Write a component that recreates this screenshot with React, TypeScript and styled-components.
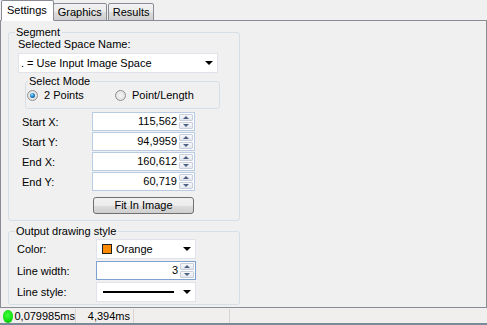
import React from 'react';
import styled, { createGlobalStyle } from 'styled-components';

const GlobalStyle = createGlobalStyle`
  html, body {
    margin: 0;
    padding: 0;
    background: #f0f0f0;
  }
  body {
    font-family: 'Liberation Sans', Arial, sans-serif;
    font-size: 11px;
    color: #000;
  }
`;

const Window = styled.div`
  width: 487px;
  height: 325px;
  display: flex;
  flex-direction: column;
  background: #f0f0f0;
  overflow: hidden;
`;

const TabStrip = styled.div`
  height: 21px;
  display: flex;
  align-items: flex-end;
  padding-left: 2px;
  margin-bottom: -1px;
  position: relative;
  z-index: 1;
`;

const Tab = styled.div<{ $active?: boolean }>`
  height: ${(p) => (p.$active ? '21px' : '18px')};
  box-sizing: border-box;
  padding: ${(p) => (p.$active ? '3px 6px 0 5px' : '2px 4px 0 4px')};
  margin-right: ${(p) => (p.$active ? '-1px' : '1px')};
  border: 1px solid #898c95;
  border-bottom: ${(p) => (p.$active ? '1px solid #fff' : '1px solid #898c95')};
  border-radius: 2px 2px 0 0;
  background: ${(p) =>
    p.$active ? '#ffffff' : 'linear-gradient(#f2f2f2, #ebebeb 50%, #dddddd 51%, #cfcfcf)'};
  line-height: 13px;
  ${(p) => (p.$active ? 'margin-left: -1px; z-index: 2;' : '')}
`;

const Panel = styled.div`
  height: 288px;
  box-sizing: border-box;
  border: 1px solid #898c95;
  background: #f0f0f0;
  padding: 11px 0 0 7px;
  display: flex;
  flex-direction: column;
`;

const Group = styled.div<{ $h: number; $w: number }>`
  width: ${(p) => p.$w}px;
  height: ${(p) => p.$h}px;
  box-sizing: border-box;
  border: 1px solid #d5dfe5;
  border-radius: 3px;
  display: flex;
  flex-direction: column;
`;

const Legend = styled.div`
  margin: -7px 0 0 6px;
  padding: 0 2px 0 1px;
  background: #f0f0f0;
  line-height: 13px;
  width: fit-content;
`;

const Label = styled.div`
  line-height: 13px;
  margin: -1px 0 0 9px;
`;

const ComboBox = styled.div<{ $w: number }>`
  width: ${(p) => p.$w}px;
  height: 20px;
  box-sizing: border-box;
  border: 1px solid #e2e3ea;
  background: #fff;
  display: flex;
  align-items: center;
  padding: 0 0 0 2px;
`;

const ComboText = styled.span`
  flex: 1;
  display: flex;
  align-items: center;
  gap: 4px;
  line-height: 13px;
`;

const Arrow = styled.span`
  width: 0;
  height: 0;
  border-left: 4px solid transparent;
  border-right: 4px solid transparent;
  border-top: 4px solid #000;
  margin-right: 4px;
`;

const SpaceCombo = styled(ComboBox)`
  margin: 2px 0 0 9px;
`;

const ModeBox = styled.div`
  width: 195px;
  height: 28px;
  box-sizing: border-box;
  margin: 8px 0 0 16px;
  border: 1px solid #d5dfe5;
  border-radius: 3px;
  display: flex;
  flex-direction: column;
`;

const ModeLegend = styled(Legend)`
  margin: -7px 0 0 2px;
`;

const RadioRow = styled.div`
  display: flex;
  align-items: center;
  margin: 1px 0 0 1px;
  height: 13px;
`;

const RadioItem = styled.label<{ $w: number }>`
  display: flex;
  align-items: center;
  gap: 6px;
  width: ${(p) => p.$w}px;
  line-height: 13px;
`;

const RadioDot = styled.span<{ $on?: boolean }>`
  width: 11px;
  height: 11px;
  box-sizing: border-box;
  border-radius: 50%;
  border: 1px solid #8e8f8f;
  background: radial-gradient(circle, #f4f4f4 0%, #dcdcdc 100%);
  display: flex;
  align-items: center;
  justify-content: center;
  &::after {
    content: '';
    display: ${(p) => (p.$on ? 'block' : 'none')};
    width: 5px;
    height: 5px;
    border-radius: 50%;
    background: radial-gradient(circle at 40% 35%, #8ee0ff 0%, #1b7ec2 50%, #0c3f73 100%);
  }
`;

const Fields = styled.div`
  display: flex;
  flex-direction: column;
  gap: 1px;
  margin-top: 3px;
`;

const FieldRow = styled.div<{ $labelW: number; $pad: number }>`
  display: grid;
  grid-template-columns: ${(p) => p.$labelW}px auto;
  align-items: center;
  padding-left: ${(p) => p.$pad}px;
  height: 19px;
`;

const SpinBox = styled.div<{ $w: number; $focus?: boolean }>`
  width: ${(p) => p.$w}px;
  height: 19px;
  box-sizing: border-box;
  border: 1px solid ${(p) => (p.$focus ? '#7da2ce' : '#b8cde3')};
  background: #fff;
  display: flex;
  align-items: stretch;
`;

const SpinValue = styled.span`
  flex: 1;
  text-align: right;
  line-height: 17px;
  padding-right: 2px;
`;

const SpinButtons = styled.div`
  width: 14px;
  display: flex;
  flex-direction: column;
  padding: 1px 1px 1px 0;
  gap: 1px;
`;

const SpinButton = styled.div<{ $down?: boolean }>`
  flex: 1;
  border: 1px solid #c6cfdb;
  border-radius: 1px;
  background: linear-gradient(#f7f8fa, #e3e8ee);
  display: flex;
  align-items: center;
  justify-content: center;
  &::after {
    content: '';
    width: 0;
    height: 0;
    border-left: 3px solid transparent;
    border-right: 3px solid transparent;
    ${(p) => (p.$down ? 'border-top: 3px solid #4d6185;' : 'border-bottom: 3px solid #4d6185;')}
  }
`;

const FitButton = styled.button`
  margin: 6px 0 0 84px;
  width: 101px;
  height: 17px;
  box-sizing: border-box;
  border: 1px solid #707070;
  border-radius: 3px;
  background: linear-gradient(#f2f2f2, #ebebeb 50%, #dddddd 51%, #cfcfcf);
  font-family: inherit;
  font-size: 11px;
  line-height: 13px;
  padding: 0;
  color: #000;
`;

const Swatch = styled.span`
  width: 10px;
  height: 10px;
  box-sizing: border-box;
  border: 1px solid #202020;
  background: #ff8c00;
`;

const LineSample = styled.span`
  display: block;
  width: 71px;
  height: 2px;
  background: #000;
  margin-left: 4px;
`;

const StyleRows = styled.div`
  display: flex;
  flex-direction: column;
  gap: 2px;
  margin-top: 1px;
`;

const StyleRow = styled(FieldRow)`
  height: auto;
`;

const StatusBar = styled.div`
  flex: 1;
  display: flex;
  align-items: stretch;
  background: #f1efed;
  border-bottom: 2px solid #7a8a99;
  margin-top: 1px;
`;

const StatusCell = styled.div<{ $w?: number; $right?: boolean }>`
  ${(p) => (p.$w ? `width: ${p.$w}px;` : 'flex: 1;')}
  box-sizing: border-box;
  display: flex;
  align-items: center;
  justify-content: ${(p) => (p.$right ? 'flex-end' : 'flex-start')};
  border-right: 1px solid #d9d6d2;
  padding: 0 ${(p) => (p.$right ? '3px' : '0')} 0 ${(p) => (p.$right ? '0' : '3px')};
  line-height: 13px;
  &:last-child {
    border-right: none;
  }
`;

const Led = styled.span`
  width: 13px;
  height: 13px;
  border-radius: 50%;
  background: radial-gradient(circle at 45% 40%, #3cff3c 0%, #10dc10 60%, #0a9a0a 100%);
  margin-right: 1px;
`;

const Spin = ({ value, w, focus }: { value: string; w: number; focus?: boolean }) => (
  <SpinBox $w={w} $focus={focus}>
    <SpinValue>{value}</SpinValue>
    <SpinButtons>
      <SpinButton />
      <SpinButton $down />
    </SpinButtons>
  </SpinBox>
);

const coords = [
  { label: 'Start X:', value: '115,562' },
  { label: 'Start Y:', value: '94,9959' },
  { label: 'End X:', value: '160,612' },
  { label: 'End Y:', value: '60,719' },
];

export default function App() {
  return (
    <Window>
      <GlobalStyle />
      <TabStrip>
        <Tab $active>Settings</Tab>
        <Tab>Graphics</Tab>
        <Tab>Results</Tab>
      </TabStrip>
      <Panel>
        <Group $w={232} $h={189}>
          <Legend>Segment</Legend>
          <Label>Selected Space Name:</Label>
          <SpaceCombo $w={200}>
            <ComboText>. = Use Input Image Space</ComboText>
            <Arrow />
          </SpaceCombo>
          <ModeBox>
            <ModeLegend>Select Mode</ModeLegend>
            <RadioRow>
              <RadioItem $w={88}>
                <RadioDot $on />
                2 Points
              </RadioItem>
              <RadioItem $w={100}>
                <RadioDot />
                Point/Length
              </RadioItem>
            </RadioRow>
          </ModeBox>
          <Fields>
            {coords.map((c) => (
              <FieldRow key={c.label} $labelW={70} $pad={13}>
                <span>{c.label}</span>
                <Spin value={c.value} w={103} />
              </FieldRow>
            ))}
          </Fields>
          <FitButton>Fit In Image</FitButton>
        </Group>
        <Group $w={232} $h={74} style={{ marginTop: 10 }}>
          <Legend>Output drawing style</Legend>
          <StyleRows>
            <StyleRow $labelW={79} $pad={8}>
              <span>Color:</span>
              <ComboBox $w={100}>
                <ComboText style={{ paddingLeft: 3 }}>
                  <Swatch />
                  Orange
                </ComboText>
                <Arrow />
              </ComboBox>
            </StyleRow>
            <StyleRow $labelW={79} $pad={8}>
              <span>Line width:</span>
              <Spin value="3" w={100} focus />
            </StyleRow>
            <StyleRow $labelW={79} $pad={8}>
              <span>Line style:</span>
              <ComboBox $w={100}>
                <ComboText>
                  <LineSample />
                </ComboText>
                <Arrow />
              </ComboBox>
            </StyleRow>
          </StyleRows>
        </Group>
      </Panel>
      <StatusBar>
        <StatusCell $w={76} style={{ paddingLeft: 3 }}>
          <Led />
          0,079985ms
        </StatusCell>
        <StatusCell $w={58} $right>
          4,394ms
        </StatusCell>
        <StatusCell $w={96} />
        <StatusCell />
      </StatusBar>
    </Window>
  );
}
